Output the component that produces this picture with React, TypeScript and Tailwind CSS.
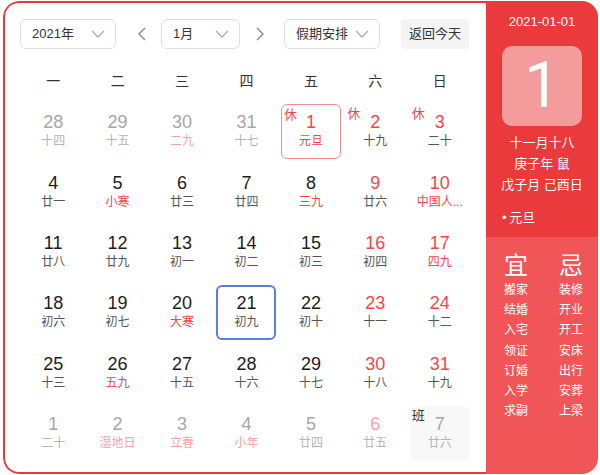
import React from "react";

type Day = {
  d: number;
  l: string;
  dim?: boolean;
  red?: boolean;
  lred?: boolean;
  tag?: string;
  sel?: boolean;
  today?: boolean;
  work?: boolean;
};

const weeks: Day[][] = [
  [
    { d: 28, l: "十四", dim: true },
    { d: 29, l: "十五", dim: true },
    { d: 30, l: "二九", dim: true, lred: true },
    { d: 31, l: "十七", dim: true },
    { d: 1, l: "元旦", red: true, lred: true, tag: "休", sel: true },
    { d: 2, l: "十九", red: true, tag: "休" },
    { d: 3, l: "二十", red: true, tag: "休" },
  ],
  [
    { d: 4, l: "廿一" },
    { d: 5, l: "小寒", lred: true },
    { d: 6, l: "廿三" },
    { d: 7, l: "廿四" },
    { d: 8, l: "三九", lred: true },
    { d: 9, l: "廿六", red: true },
    { d: 10, l: "中国人...", red: true, lred: true },
  ],
  [
    { d: 11, l: "廿八" },
    { d: 12, l: "廿九" },
    { d: 13, l: "初一" },
    { d: 14, l: "初二" },
    { d: 15, l: "初三" },
    { d: 16, l: "初四", red: true },
    { d: 17, l: "四九", red: true, lred: true },
  ],
  [
    { d: 18, l: "初六" },
    { d: 19, l: "初七" },
    { d: 20, l: "大寒", lred: true },
    { d: 21, l: "初九", today: true },
    { d: 22, l: "初十" },
    { d: 23, l: "十一", red: true },
    { d: 24, l: "十二", red: true },
  ],
  [
    { d: 25, l: "十三" },
    { d: 26, l: "五九", lred: true },
    { d: 27, l: "十五" },
    { d: 28, l: "十六" },
    { d: 29, l: "十七" },
    { d: 30, l: "十八", red: true },
    { d: 31, l: "十九", red: true },
  ],
  [
    { d: 1, l: "二十", dim: true },
    { d: 2, l: "湿地日", dim: true, lred: true },
    { d: 3, l: "立春", dim: true, lred: true },
    { d: 4, l: "小年", dim: true, lred: true },
    { d: 5, l: "廿四", dim: true },
    { d: 6, l: "廿五", dim: true, red: true },
    { d: 7, l: "廿六", dim: true, tag: "班", work: true },
  ],
];

const yi = ["搬家", "结婚", "入宅", "领证", "订婚", "入学", "求嗣"];
const ji = ["装修", "开业", "开工", "安床", "出行", "安葬", "上梁"];

function ChevronDown() {
  return (
    <svg width="14" height="8" viewBox="0 0 14 8" fill="none">
      <path d="M1 1l6 6 6-6" stroke="#a8abb2" strokeWidth="1.3" />
    </svg>
  );
}

function Arrow({ dir }: { dir: "left" | "right" }) {
  return (
    <svg width="24" height="24" viewBox="0 0 24 24" fill="none">
      <path
        d={dir === "left" ? "M15 6l-6 6 6 6" : "M9 6l6 6-6 6"}
        stroke="#8c8f96"
        strokeWidth="1.5"
      />
    </svg>
  );
}

function Select({ label, className }: { label: string; className: string }) {
  return (
    <div
      className={`flex items-center justify-between h-[30px] pl-[11px] pr-[10px] border border-[#dcdfe6] rounded-[6px] text-[13px] text-[#333] ${className}`}
    >
      <span>{label}</span>
      <ChevronDown />
    </div>
  );
}

function Cell({ day }: { day: Day }) {
  let numColor = "text-[#1c1c1c]";
  if (day.dim && day.red) numColor = "text-[#f8a3a8]";
  else if (day.dim) numColor = "text-[#a6a6a6]";
  else if (day.red) numColor = "text-[#f2464e]";

  let lunarColor = "text-[#555]";
  if (day.dim && day.lred) lunarColor = "text-[#f8a3a8]";
  else if (day.dim) lunarColor = "text-[#b5b5b5]";
  else if (day.lred) lunarColor = "text-[#f2464e]";

  let box = "";
  if (day.sel) box = "border-[1.5px] border-[#f28b8e]";
  else if (day.today) box = "border-2 border-[#5b7de6]";
  else if (day.work) box = "bg-[#f8f8f8]";

  return (
    <div className="h-[60.4px] flex items-center justify-center">
      <div
        className={`relative w-[60px] h-[55px] rounded-[6px] flex flex-col items-center justify-center ${box}`}
      >
        {day.tag && (
          <span
            className={`absolute top-[2px] left-[2px] text-[13px] leading-[15px] ${
              day.work ? "text-[#333]" : "text-[#f2464e]"
            }`}
          >
            {day.tag}
          </span>
        )}
        <span className={`text-[18px] leading-[20px] ${numColor}`}>{day.d}</span>
        <span className={`text-[12px] leading-[18px] whitespace-nowrap ${lunarColor}`}>
          {day.l}
        </span>
      </div>
    </div>
  );
}

export default function App() {
  return (
    <div className="w-[600px] h-[475px] pl-[3px] pt-[1px] bg-white font-['Liberation_Sans','Noto_Sans_CJK_SC',sans-serif]">
      <div className="flex w-[595px] h-[473px] rounded-[16px] overflow-hidden">
        {/* Calendar */}
        <div className="w-[483px] h-full border-2 border-r-0 border-[#e8393b] rounded-l-[16px] pl-[15px] pt-[16px]">
          <div className="flex items-center">
            <Select label="2021年" className="w-[96px]" />
            <span className="ml-[14px]">
              <Arrow dir="left" />
            </span>
            <Select label="1月" className="w-[79px] ml-[7px]" />
            <span className="ml-[8px]">
              <Arrow dir="right" />
            </span>
            <Select label="假期安排" className="w-[96px] ml-[12px]" />
            <button className="ml-[21px] w-[68px] h-[30px] rounded-[4px] bg-[#f4f4f5] text-[13px] text-[#333]">
              返回今天
            </button>
          </div>

          <div className="ml-[1px] w-[451px]">
            <div className="grid grid-cols-7 mt-[12px] h-[40px] items-center text-center text-[14px] text-[#333]">
              {["一", "二", "三", "四", "五", "六", "日"].map((w) => (
                <span key={w}>{w}</span>
              ))}
            </div>
            <div className="grid grid-cols-7">
              {weeks.flat().map((day, i) => (
                <Cell key={i} day={day} />
              ))}
            </div>
          </div>
        </div>

        {/* Day detail */}
        <div className="flex-1 flex flex-col text-white">
          <div className="h-[236px] bg-[#ea3a3b] pt-[12px] flex flex-col items-center">
            <p className="text-[13px] leading-[18px]">2021-01-01</p>
            <div className="mt-[15px] w-[80px] h-[80px] rounded-[10px] bg-[#f49b9b] flex items-center justify-center">
              <span className="font-['Roboto',sans-serif] font-normal text-[64px] leading-none">1</span>
            </div>
            <div className="mt-[6px] text-[13px] leading-[21px] text-center">
              <p>十一月十八</p>
              <p>庚子年 鼠</p>
              <p>戊子月 己酉日</p>
            </div>
            <p className="self-start pl-[16px] mt-[12px] text-[13px] leading-[21px]">
              •&thinsp;元旦
            </p>
          </div>
          <div className="flex-1 bg-[#f05657] pt-[15px] pl-[15px] flex gap-[25px]">
            {[
              { t: "宜", items: yi },
              { t: "忌", items: ji },
            ].map((col) => (
              <div key={col.t} className="w-[30px] flex flex-col items-center">
                <span className="text-[24px] leading-[28px]">{col.t}</span>
                {col.items.map((it) => (
                  <span key={it} className="text-[12px] leading-[20.2px] whitespace-nowrap">
                    {it}
                  </span>
                ))}
              </div>
            ))}
          </div>
        </div>
      </div>
    </div>
  );
}
